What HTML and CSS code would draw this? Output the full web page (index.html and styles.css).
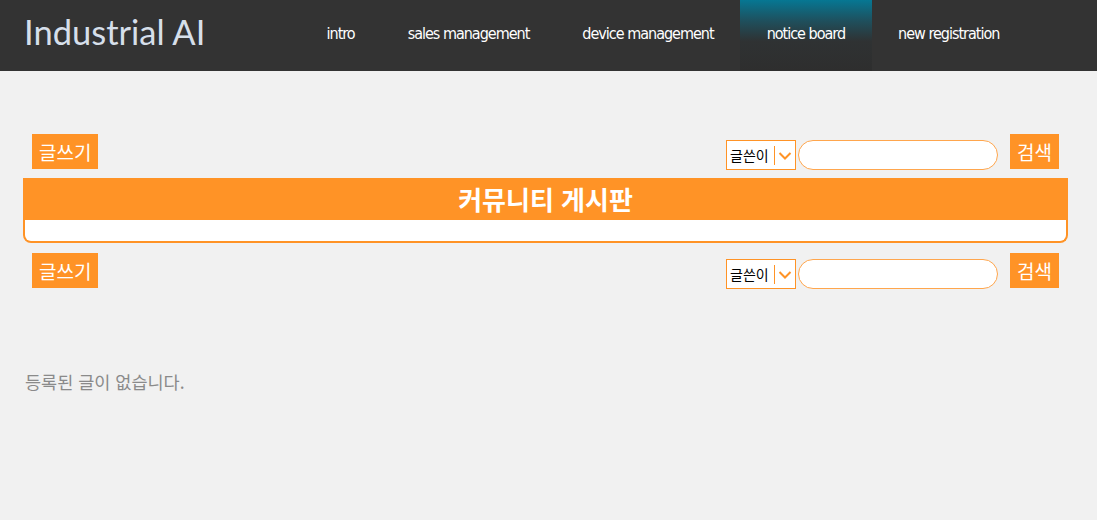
FILE: index.html
```html
<!DOCTYPE html>
<html lang="ko">
<head>
<meta charset="utf-8">
<title>Industrial AI</title>
<link rel="stylesheet" href="styles.css">
</head>
<body>
<header class="topbar">
  <div class="logo">Industrial AI</div>
  <nav class="nav">
    <a class="nav-item" href="#">intro</a>
    <a class="nav-item" href="#">sales management</a>
    <a class="nav-item" href="#">device management</a>
    <a class="nav-item active" href="#">notice board</a>
    <a class="nav-item" href="#">new registration</a>
  </nav>
</header>
<main class="content">
  <div class="toolbar toolbar-top">
    <button class="btn">글쓰기</button>
    <div class="search">
      <div class="select">
        <span class="select-label">글쓴이</span>
        <span class="select-sep"></span>
        <svg class="select-arrow" width="14" height="10" viewBox="0 0 14 10"><path d="M1.5 2 L7 7.5 L12.5 2" fill="none" stroke="#ff9326" stroke-width="2"/></svg>
      </div>
      <div class="input"></div>
      <button class="btn btn-search">검색</button>
    </div>
  </div>
  <section class="board">
    <h2 class="board-title">커뮤니티 게시판</h2>
    <div class="board-body"></div>
  </section>
  <div class="toolbar toolbar-bottom">
    <button class="btn">글쓰기</button>
    <div class="search">
      <div class="select">
        <span class="select-label">글쓴이</span>
        <span class="select-sep"></span>
        <svg class="select-arrow" width="14" height="10" viewBox="0 0 14 10"><path d="M1.5 2 L7 7.5 L12.5 2" fill="none" stroke="#ff9326" stroke-width="2"/></svg>
      </div>
      <div class="input"></div>
      <button class="btn btn-search">검색</button>
    </div>
  </div>
  <p class="empty">등록된 글이 없습니다.</p>
</main>
</body>
</html>
```
FILE: styles.css
```css
html, body {
  margin: 0;
  padding: 0;
  background: #f1f1f1;
  font-family: "Noto Sans CJK KR", "Noto Sans", sans-serif;
}
.topbar {
  height: 71px;
  background: #333333;
  display: flex;
  align-items: stretch;
}
.logo {
  width: 300px;
  box-sizing: border-box;
  padding-left: 24px;
  font-family: "Lato", sans-serif;
  font-size: 34.5px;
  color: #d6dfea;
  line-height: 64px;
}
.nav {
  display: flex;
  align-items: stretch;
}
.nav-item {
  display: flex;
  align-items: center;
  padding: 0 26.5px 4px;
  color: #ffffff;
  text-decoration: none;
  font-family: "DejaVu Sans Condensed", sans-serif;
  font-size: 16px;
  letter-spacing: -1px;
}
.nav-item.active {
  background: linear-gradient(to bottom, #067793 0%, #1f4f5c 30%, #2f3233 58%, #2e2e2e 100%);
}
.content {
  width: 1045px;
  margin-left: 23px;
}
.toolbar {
  display: flex;
  justify-content: space-between;
  align-items: flex-end;
  padding: 0 9px;
}
.toolbar-top {
  margin-top: 63px;
}
.toolbar-bottom {
  margin-top: 10px;
}
.btn {
  height: 35px;
  margin: 0 0 1px 0;
  padding: 0 7px;
  border: none;
  background: #ff9326;
  color: #ffffff;
  font-family: "Noto Sans CJK KR", sans-serif;
  font-size: 19px;
  line-height: 35px;
}
.search {
  display: flex;
  align-items: flex-end;
}
.select {
  width: 70px;
  height: 30px;
  box-sizing: border-box;
  border: 1px solid #ff9326;
  background: #ffffff;
  display: flex;
  align-items: center;
  padding-left: 3px;
}
.select-label {
  font-size: 14px;
  color: #000000;
  line-height: 1;
}
.select-sep {
  width: 1px;
  height: 19px;
  background: #ff9326;
  margin-left: 5px;
}
.select-arrow {
  margin-left: 3px;
  margin-top: 2px;
}
.input {
  width: 200px;
  height: 30px;
  box-sizing: border-box;
  margin-left: 2px;
  border: 1px solid #ffa64d;
  border-radius: 15px;
  background: #ffffff;
}
.btn-search {
  margin-left: 12px;
}
.board {
  margin-top: 8px;
  border: 2px solid #ff9326;
  border-top: none;
  border-radius: 0 0 8px 8px;
  background: #ffffff;
}
.board-title {
  margin: 0 -2px;
  height: 42px;
  background: #ff9326;
  color: #ffffff;
  font-size: 26px;
  font-weight: 700;
  text-align: center;
  line-height: 42px;
}
.board-body {
  height: 21px;
}
.empty {
  margin: 80px 0 0 2px;
  font-size: 17.5px;
  line-height: 26px;
  color: #8a8a8a;
}
```
